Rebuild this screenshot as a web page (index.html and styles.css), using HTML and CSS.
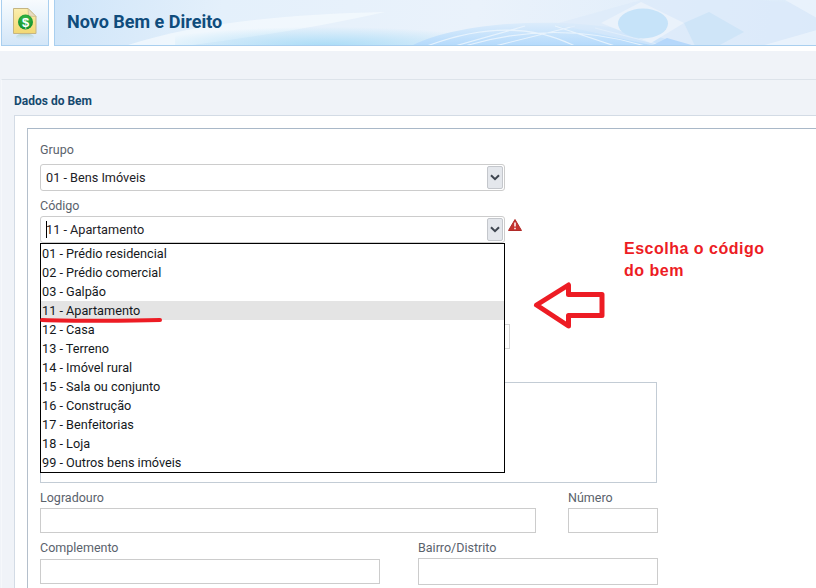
FILE: index.html
```html
<!DOCTYPE html>
<html lang="pt-BR">
<head>
<meta charset="utf-8">
<title>Novo Bem e Direito</title>
<link rel="stylesheet" href="styles.css">
</head>
<body>
<header class="top">
  <div class="tile">
    <svg class="doc" viewBox="0 0 24 38" width="24" height="38" aria-hidden="true">
      <defs>
        <linearGradient id="pg" x1="0" y1="0" x2="0" y2="1"><stop offset="0" stop-color="#fbeeae"/><stop offset="1" stop-color="#f2d873"/></linearGradient>
        <linearGradient id="rf" x1="0" y1="0" x2="0" y2="1"><stop offset="0" stop-color="#8fbf9c" stop-opacity=".55"/><stop offset="1" stop-color="#cfe3f7" stop-opacity="0"/></linearGradient>
        <radialGradient id="gr" cx=".5" cy=".35" r=".7"><stop offset="0" stop-color="#3ec04a"/><stop offset="1" stop-color="#0b8a2a"/></radialGradient>
      </defs>
      <ellipse cx="12" cy="29" rx="9" ry="3.500" fill="url(#rf)"/>
      <path d="M.5.500H15L23 8.500V25.500H.5Z" fill="url(#pg)" stroke="#c5b583"/>
      <path d="M15 .5 15.500 8 23 8.500Z" fill="#e7dcc0" stroke="#c5b583" stroke-width=".6"/>
      <circle cx="12.500" cy="14" r="7.500" fill="url(#gr)"/>
      <text x="12.500" y="18.500" class="dollar" text-anchor="middle">$</text>
    </svg>
  </div>
  <div class="banner">
    <svg class="art" viewBox="0 0 762 46" width="762" height="46" preserveAspectRatio="none" aria-hidden="true">
      <defs>
        <linearGradient id="gl" x1="0" y1="0" x2="0" y2="1"><stop offset="0" stop-color="#dcecfb"/><stop offset="1" stop-color="#b4dafc"/></linearGradient>
        <radialGradient id="gw" cx=".5" cy="1" r=".6"><stop offset="0" stop-color="#a9dcf7"/><stop offset="1" stop-color="#a9dcf7" stop-opacity="0"/></radialGradient>
      </defs>
      <path d="M70 46C130 26 220 14 330 12 270 26 180 40 130 46Z" fill="#f4f9fd" opacity=".75"/>
      <rect x="120" y="14" width="300" height="32" fill="url(#gw)"/>
      <path d="M356 46C420 14 560 16 630 46Z" fill="url(#gl)"/>
      <path d="M372 46C430 24 480 26 520 46M410 46C470 28 530 28 590 46M470 26 400 46M520 26 440 46M540 28 610 46M500 26 560 46" fill="none" stroke="#eaf4fd" stroke-width="1.200" opacity=".9"/>
      <path d="M500 24 586 0H700L762 4V46H600Z" fill="#dbeafa" opacity=".55"/>
      <path d="M586 2 629 23 596 43 546 23Z" fill="#eaf2fb"/>
      <ellipse cx="588" cy="23.500" rx="25" ry="15" fill="#c6e3f9"/>
      <path d="M654 12 689 32 663 46H640L629 23Z" fill="#cfe5f8"/>
      <path d="M596 46 612 38 640 46Z" fill="#b6d8fb"/>
      <path d="M730 0 762 18V0ZM706 46 762 30V46Z" fill="#eef5fc" opacity=".7"/>
    </svg>
    <h1 class="title">Novo Bem e Direito</h1>
  </div>
</header>

<main class="page">
  <section class="panel">
    <h2 class="panel-title">Dados do Bem</h2>
    <div class="outer">
      <div class="inner">
        <form class="form">
          <label class="lbl lbl-first">Grupo</label>
          <div class="sel">
            <span class="sel-text">01 - Bens Imóveis</span>
            <span class="sel-btn"><svg viewBox="0 0 10 7" width="10" height="7" aria-hidden="true"><path d="M1 1.200 5 5.200 9 1.200" fill="none" stroke="#3f4650" stroke-width="2"/></svg></span>
          </div>
          <label class="lbl lbl-second">Código</label>
          <div class="sel-row">
            <div class="sel">
              <span class="sel-text"><span class="caret"></span>11 - Apartamento</span>
              <span class="sel-btn"><svg viewBox="0 0 10 7" width="10" height="7" aria-hidden="true"><path d="M1 1.200 5 5.200 9 1.200" fill="none" stroke="#3f4650" stroke-width="2"/></svg></span>
            </div>
            <svg class="warn" viewBox="0 0 14 12" width="14" height="12" aria-hidden="true">
              <path d="M7 .5 13.500 11.500H.5Z" fill="#c5322f" stroke="#b02a28" stroke-linejoin="round"/>
              <path d="M7 3.500V7.500M7 8.800V10.300" stroke="#fff" stroke-width="1.500"/>
            </svg>
            <ul class="list">
              <li>01 - Prédio residencial</li>
              <li>02 - Prédio comercial</li>
              <li>03 - Galpão</li>
              <li class="on">11 - Apartamento</li>
              <li>12 - Casa</li>
              <li>13 - Terreno</li>
              <li>14 - Imóvel rural</li>
              <li>15 - Sala ou conjunto</li>
              <li>16 - Construção</li>
              <li>17 - Benfeitorias</li>
              <li>18 - Loja</li>
              <li>99 - Outros bens imóveis</li>
            </ul>
          </div>
          <div class="hidden-input"></div>
          <div class="box"></div>
          <div class="row row-a">
            <div class="col col-log"><label class="lbl">Logradouro</label><div class="inp"></div></div>
            <div class="col col-num"><label class="lbl">Número</label><div class="inp"></div></div>
          </div>
          <div class="row row-b">
            <div class="col col-comp"><label class="lbl">Complemento</label><div class="inp"></div></div>
            <div class="col col-bai"><label class="lbl">Bairro/Distrito</label><div class="inp inp-tall"></div></div>
          </div>
        </form>
      </div>
    </div>
  </section>
</main>

<svg class="marks" viewBox="0 0 816 588" width="816" height="588" aria-hidden="true">
  <path d="M42 320C70 321 130 321 160 320" fill="none" stroke="#ed1c24" stroke-width="4" stroke-linecap="round"/>
  <path d="M536.500 305 568.500 285V294.500H602V315.500H568.500V326Z" fill="#fff" stroke="#ed1c24" stroke-width="5" stroke-linejoin="round"/>
</svg>
<p class="note">Escolha o código<br>do bem</p>
</body>
</html>
```

FILE: styles.css
```css
* { box-sizing: border-box; }
html, body { margin: 0; padding: 0; }
body {
  width: 816px;
  height: 588px;
  overflow: hidden;
  background: #fff;
  position: relative;
  font-family: Roboto, "Liberation Sans", sans-serif;
  font-size: 12.700px;
  color: #1d2126;
}

/* header */
.top { display: flex; height: 46px; gap: 5px; padding-left: 1px; }
.tile {
  width: 48px;
  display: flex;
  justify-content: center;
  padding-top: 8px;
  background: linear-gradient(#f7fbfe, #d3e6f8);
  border: 1px solid #a9cfef;
  border-top: 0;
}
.doc { display: block; }
.dollar { font: 700 13px "Liberation Sans", sans-serif; fill: #fff; }
.banner {
  position: relative;
  flex: 1;
  display: flex;
  align-items: center;
  padding: 0 0 3px 12px;
  background: linear-gradient(100deg, #cfe5f9 0%, #e4f0fb 22%, #eaf2fb 55%, #dcebfa 100%);
  border-left: 1px solid #a9cfef;
  border-bottom: 1px solid #a9cfef;
  overflow: hidden;
}
.art { position: absolute; left: 0; top: 0; }
.title {
  position: relative;
  margin: 0;
  font-size: 18px;
  font-weight: 700;
  color: #0f4c7c;
}

/* page */
.page { margin-top: 5px; padding-top: 28px; background: #f0f3f8; height: 537px; }
.panel { height: 509px; margin-left: 1px; border-top: 1px solid #dde3ea; border-left: 1px solid #f6f8fb; }
.panel-title {
  margin: 0;
  padding: 14px 0 0 12px;
  height: 35px;
  font-size: 12px;
  font-weight: 700;
  line-height: 14px;
  color: #15496f;
}
.outer {
  margin-left: 12px;
  height: 474px;
  background: #fff;
  border-top: 1px solid #d3dbe5;
  border-left: 1px solid #d3dbe5;
  padding: 12px 0 0 12px;
}
.inner {
  height: 461px;
  border-top: 1px solid #a9b8c8;
  border-left: 1px solid #b4bfcb;
  padding-left: 12px;
}
.form { display: block; width: 620px; }

/* fields */
.lbl { display: block; height: 15px; line-height: 15px; font-size: 12.500px; color: #5a626c; }
.lbl-first { margin-top: 13px; margin-bottom: 7px; }
.lbl-second { margin-top: 7px; margin-bottom: 3px; }
.sel {
  width: 465px;
  height: 27px;
  display: flex;
  align-items: center;
  justify-content: space-between;
  background: #fff;
  border: 1px solid #ccc;
  border-radius: 3px;
  padding: 1px 1px 1px 5px;
}
.sel-text { position: relative; line-height: 25px; color: #1d2126; }
.sel-btn {
  width: 16px;
  height: 23px;
  display: flex;
  align-items: center;
  justify-content: center;
  background: #e4e7ec;
  border: 1px solid #c4c7cc;
  border-radius: 2px;
}
.sel-row { position: relative; display: flex; align-items: flex-start; }
.caret { position: absolute; left: 0; top: 4px; width: 1px; height: 17px; background: #000; }
.warn { margin: 3px 0 0 3px; }

/* open dropdown */
.list {
  position: absolute;
  z-index: 2;
  left: 0;
  top: 27px;
  width: 465px;
  height: 230px;
  margin: 0;
  padding: 0;
  list-style: none;
  background: #fff;
  border: 1px solid #000;
}
.list li { height: 19px; padding-left: 1px; line-height: 19px; color: #14181c; }
.list .on { background: #e4e4e4; }

/* fields behind the dropdown */
.hidden-input { width: 470px; height: 25px; margin-top: 81px; border: 1px solid #d4d4d4; }
.box { width: 617px; height: 101px; margin-top: 33px; border: 1px solid #c3ccd5; }
.row { display: flex; }
.row-a { margin-top: 7px; gap: 32px; }
.row-b { margin-top: 7px; gap: 38px; }
.col-log { width: 496px; }
.col-num { width: 90px; }
.col-comp { width: 340px; }
.col-bai { width: 240px; }
.inp { height: 25px; margin-top: 3px; background: #fff; border: 1px solid #ccc; }
.row-b .inp { margin-top: 4px; }
.row-b .inp-tall { height: 27px; margin-top: 3px; }

/* annotations over the page */
.marks { position: absolute; z-index: 3; left: 0; top: 0; pointer-events: none; }
.note {
  position: absolute;
  z-index: 3;
  left: 624px;
  top: 238px;
  margin: 0;
  font-family: "Liberation Sans", sans-serif;
  font-size: 16px;
  font-weight: 700;
  line-height: 22px;
  letter-spacing: .5px;
  color: #ed1c24;
}
```
